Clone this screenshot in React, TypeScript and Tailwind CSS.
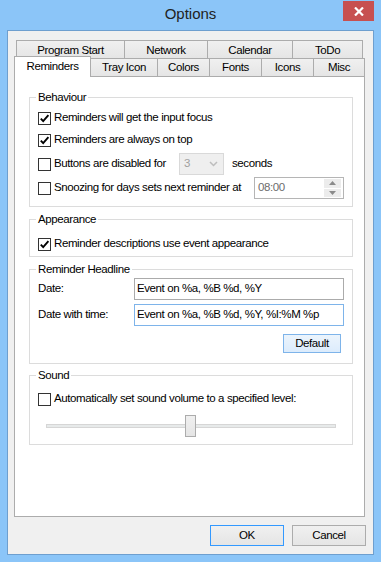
import React from "react";

const row1 = [
  { label: "Program Start", w: "w-[108px]", last: false },
  { label: "Network", w: "w-[83px]", last: false },
  { label: "Calendar", w: "w-[85px]", last: false },
  { label: "ToDo", w: "w-[71px]", last: true },
];

const row2 = [
  { label: "Tray Icon", w: "w-[67px]" },
  { label: "Colors", w: "w-[52px]" },
  { label: "Fonts", w: "w-[52px]" },
  { label: "Icons", w: "w-[52px]" },
  { label: "Misc", w: "w-[51px]" },
];

function CheckBox({ checked }: { checked?: boolean }) {
  return (
    <span className="flex h-[13px] w-[13px] shrink-0 items-center justify-center border border-[#333333] bg-white">
      {checked && (
        <svg width="11" height="11" viewBox="0 0 11 11">
          <path d="M1.8 5.6 L4.2 8.2 L9.4 2.2" fill="none" stroke="#000" strokeWidth="1.9" />
        </svg>
      )}
    </span>
  );
}

function Group({ title, children, className }: { title: string; children: React.ReactNode; className?: string }) {
  return (
    <fieldset className={"mx-0 border border-[#dcdcdc] " + (className ?? "")}>
      <legend className="ml-[6px] px-[2px] leading-[15px]">{title}</legend>
      {children}
    </fieldset>
  );
}

export default function App() {
  return (
    <div className="flex h-[562px] w-[381px] flex-col bg-[#8bc5f8] px-[7px] pb-[7px] text-[11.5px] tracking-[-0.4px] text-black font-['Liberation_Sans',Arial,sans-serif]">
      {/* title bar */}
      <div className="grid h-[30px] shrink-0 grid-cols-[31px_1fr_31px]">
        <div />
        <div className="self-center pb-[1px] text-center text-[15px] tracking-normal text-[#222]">Options</div>
        <div className="mt-[1px] flex h-[20px] items-center justify-center bg-[#c75050]">
          <svg width="10" height="9" viewBox="0 0 10 9">
            <path d="M1 0.5 L9 8.5 M9 0.5 L1 8.5" stroke="#fff" strokeWidth="2.2" />
          </svg>
        </div>
      </div>

      {/* client area */}
      <div className="flex flex-1 flex-col border border-[#6e9fcf] bg-[#f0f0f0]">
        {/* tabs */}
        <div className="mt-[9px] flex h-[18px] pl-[8px]">
          {row1.map((t) => (
            <div
              key={t.label}
              className={
                "flex items-center justify-center border-l border-t border-[#acacac] bg-gradient-to-b from-[#f0f0f0] to-[#e5e5e5] pt-[2px] " +
                t.w +
                (t.last ? " border-r" : "")
              }
            >
              {t.label}
            </div>
          ))}
        </div>
        <div className="relative z-10 -mt-[2px] flex h-[20px] items-end pl-[6px]">
          <div className="-mb-px flex h-[21px] w-[77px] items-center justify-center border-x border-t border-[#acacac] bg-white">
            Reminders
          </div>
          {row2.map((t) => (
            <div
              key={t.label}
              className={
                "flex h-[18px] items-center justify-center border-r border-t border-[#acacac] bg-gradient-to-b from-[#f0f0f0] to-[#e5e5e5] pt-[1px] " +
                t.w
              }
            >
              {t.label}
            </div>
          ))}
        </div>

        {/* panel */}
        <div className="ml-[6px] h-[441px] w-[351px] border border-[#acacac] bg-white pl-[14px] pr-[11px] pt-[13px]">
          <Group title="Behaviour" className="pb-[7px]">
            <div className="pt-[2px]">
              <div className="flex h-[22px] items-center gap-[3px] pl-[8px]">
                <CheckBox checked />
                <span>Reminders will get the input focus</span>
              </div>
              <div className="flex h-[22px] items-center gap-[3px] pl-[8px]">
                <CheckBox checked />
                <span>Reminders are always on top</span>
              </div>
              <div className="flex h-[26px] items-center pl-[8px]">
                <CheckBox />
                <span className="ml-[3px] w-[125px]">Buttons are disabled for</span>
                <div className="flex h-[22px] w-[45px] items-center justify-between border border-[#d9d9d9] bg-[#efefef] pl-[4px] pr-[5px] text-[#a0a0a0]">
                  <span>3</span>
                  <svg width="9" height="6" viewBox="0 0 9 6">
                    <path d="M1 1 L4.5 4.5 L8 1" stroke="#bdbdbd" fill="none" strokeWidth="1.5" />
                  </svg>
                </div>
                <span className="ml-[8px]">seconds</span>
              </div>
              <div className="flex h-[22px] items-center pl-[8px]">
                <CheckBox />
                <span className="ml-[3px] w-[200px]">Snoozing for days sets next reminder at</span>
                <div className="flex h-[22px] w-[90px] items-center justify-between border border-[#b5b5b5] bg-white pl-[3px] pr-[2px] text-[#6d6d6d]">
                  <span>08:00</span>
                  <div className="flex h-[18px] w-[17px] flex-col gap-[1px]">
                    <div className="flex flex-1 items-center justify-center bg-[#ececec]">
                      <svg width="7" height="4" viewBox="0 0 7 4">
                        <path d="M0 4 L3.5 0 L7 4 Z" fill="#8a8a8a" />
                      </svg>
                    </div>
                    <div className="flex flex-1 items-center justify-center bg-[#ececec]">
                      <svg width="7" height="4" viewBox="0 0 7 4">
                        <path d="M0 0 L3.5 4 L7 0 Z" fill="#8a8a8a" />
                      </svg>
                    </div>
                  </div>
                </div>
              </div>
            </div>
          </Group>

          <Group title="Appearance" className="mt-[5px] pb-[1px]">
            <div className="flex h-[22px] items-center gap-[3px] pl-[8px] mt-[6px]">
              <CheckBox checked />
              <span>Reminder descriptions use event appearance</span>
            </div>
          </Group>

          <Group title="Reminder Headline" className="mt-[5px] pb-[10px]">
            <div className="flex h-[22px] items-center mt-[1px]">
              <span className="w-[104px] pl-[8px]">Date:</span>
              <div className="flex h-[22px] w-[210px] items-center border border-[#ababab] bg-white pl-[2px]">
                Event on %a, %B %d, %Y
              </div>
            </div>
            <div className="mt-[4px] flex h-[22px] items-center">
              <span className="w-[104px] pl-[8px]">Date with time:</span>
              <div className="flex h-[22px] w-[210px] items-center border border-[#7eb4ea] bg-white pl-[2px]">
                Event on %a, %B %d, %Y, %I:%M %p
              </div>
            </div>
            <div className="mt-[8px] flex justify-end pr-[11px]">
              <div className="flex h-[19px] w-[58px] items-center justify-center border border-[#7eb4ea] bg-gradient-to-b from-[#ecf4fc] to-[#dcecfc]">
                Default
              </div>
            </div>
          </Group>

          <Group title="Sound" className="mt-[4px] pb-[6px]">
            <div className="mt-[5px] flex h-[22px] items-center gap-[3px] pl-[8px]">
              <CheckBox />
              <span>Automatically set sound volume to a specified level:</span>
            </div>
            <div className="mt-[4px] flex h-[24px] items-center pl-[16px]">
              <div className="flex h-[4px] w-[290px] items-center border border-[#d6d6d6] bg-[#e7eaea]">
                <div className="ml-[138px] h-[22px] w-[11px] shrink-0 border border-[#acacac] bg-gradient-to-b from-[#f0f0f0] to-[#e5e5e5]" />
              </div>
            </div>
          </Group>
        </div>

        {/* buttons */}
        <div className="mt-[8px] flex justify-end gap-[8px] pr-[7px]">
          <div className="flex h-[21px] w-[74px] items-center justify-center border border-[#3399ff] bg-gradient-to-b from-[#f0f0f0] to-[#e5e5e5]">
            OK
          </div>
          <div className="flex h-[21px] w-[74px] items-center justify-center border border-[#acacac] bg-gradient-to-b from-[#f0f0f0] to-[#e5e5e5]">
            Cancel
          </div>
        </div>
      </div>
    </div>
  );
}
